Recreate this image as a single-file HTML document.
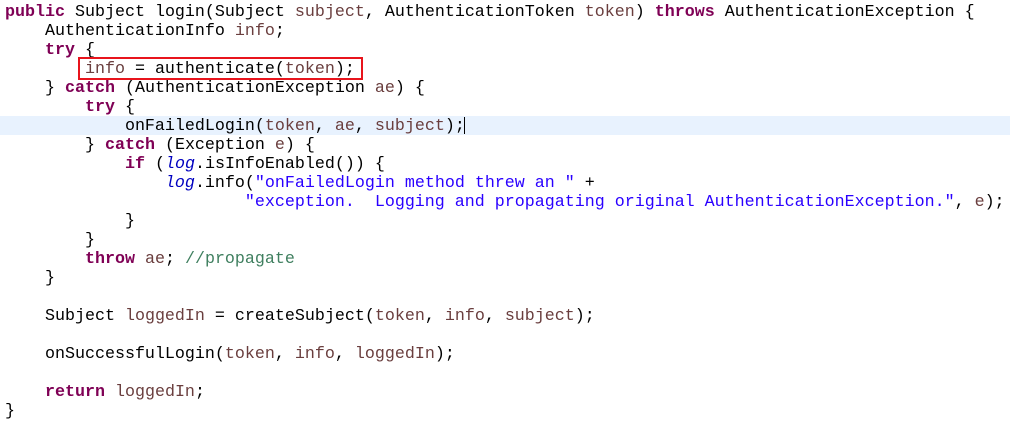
<!DOCTYPE html>
<html><head><meta charset="utf-8"><style>
html,body{margin:0;padding:0;background:#fff;width:1010px;height:426px;overflow:hidden}
pre{margin:0;position:absolute;left:5px;top:3px;font-family:"Courier New","Liberation Mono",monospace;font-size:16.67px;line-height:19px;color:#000}
.k{color:#7f0055;font-weight:bold}.v{color:#6a3e3e}.s{color:#2a00ff}.c{color:#3f7f5f}.f{color:#0000c0;font-style:italic}
.hl{position:absolute;left:0;top:116px;width:1010px;height:19px;background:#e8f2fe}
.box{position:absolute;left:78px;top:57px;width:281px;height:19px;border:2px solid #e8141c}
.cur{position:absolute;left:464px;top:117px;width:1px;height:17px;background:#000}
</style></head><body>
<div class="hl"></div>
<pre><span class="k">public</span> Subject login(Subject <span class="v">subject</span>, AuthenticationToken <span class="v">token</span>) <span class="k">throws</span> AuthenticationException {
    AuthenticationInfo <span class="v">info</span>;
    <span class="k">try</span> {
        <span class="v">info</span> = authenticate(<span class="v">token</span>);
    } <span class="k">catch</span> (AuthenticationException <span class="v">ae</span>) {
        <span class="k">try</span> {
            onFailedLogin(<span class="v">token</span>, <span class="v">ae</span>, <span class="v">subject</span>);
        } <span class="k">catch</span> (Exception <span class="v">e</span>) {
            <span class="k">if</span> (<span class="f">log</span>.isInfoEnabled()) {
                <span class="f">log</span>.info(<span class="s">"onFailedLogin method threw an "</span> +
                        <span class="s">"exception.  Logging and propagating original AuthenticationException."</span>, <span class="v">e</span>);
            }
        }
        <span class="k">throw</span> <span class="v">ae</span>; <span class="c">//propagate</span>
    }

    Subject <span class="v">loggedIn</span> = createSubject(<span class="v">token</span>, <span class="v">info</span>, <span class="v">subject</span>);

    onSuccessfulLogin(<span class="v">token</span>, <span class="v">info</span>, <span class="v">loggedIn</span>);

    <span class="k">return</span> <span class="v">loggedIn</span>;
}</pre>
<div class="box"></div>
<div class="cur"></div>
</body></html>
